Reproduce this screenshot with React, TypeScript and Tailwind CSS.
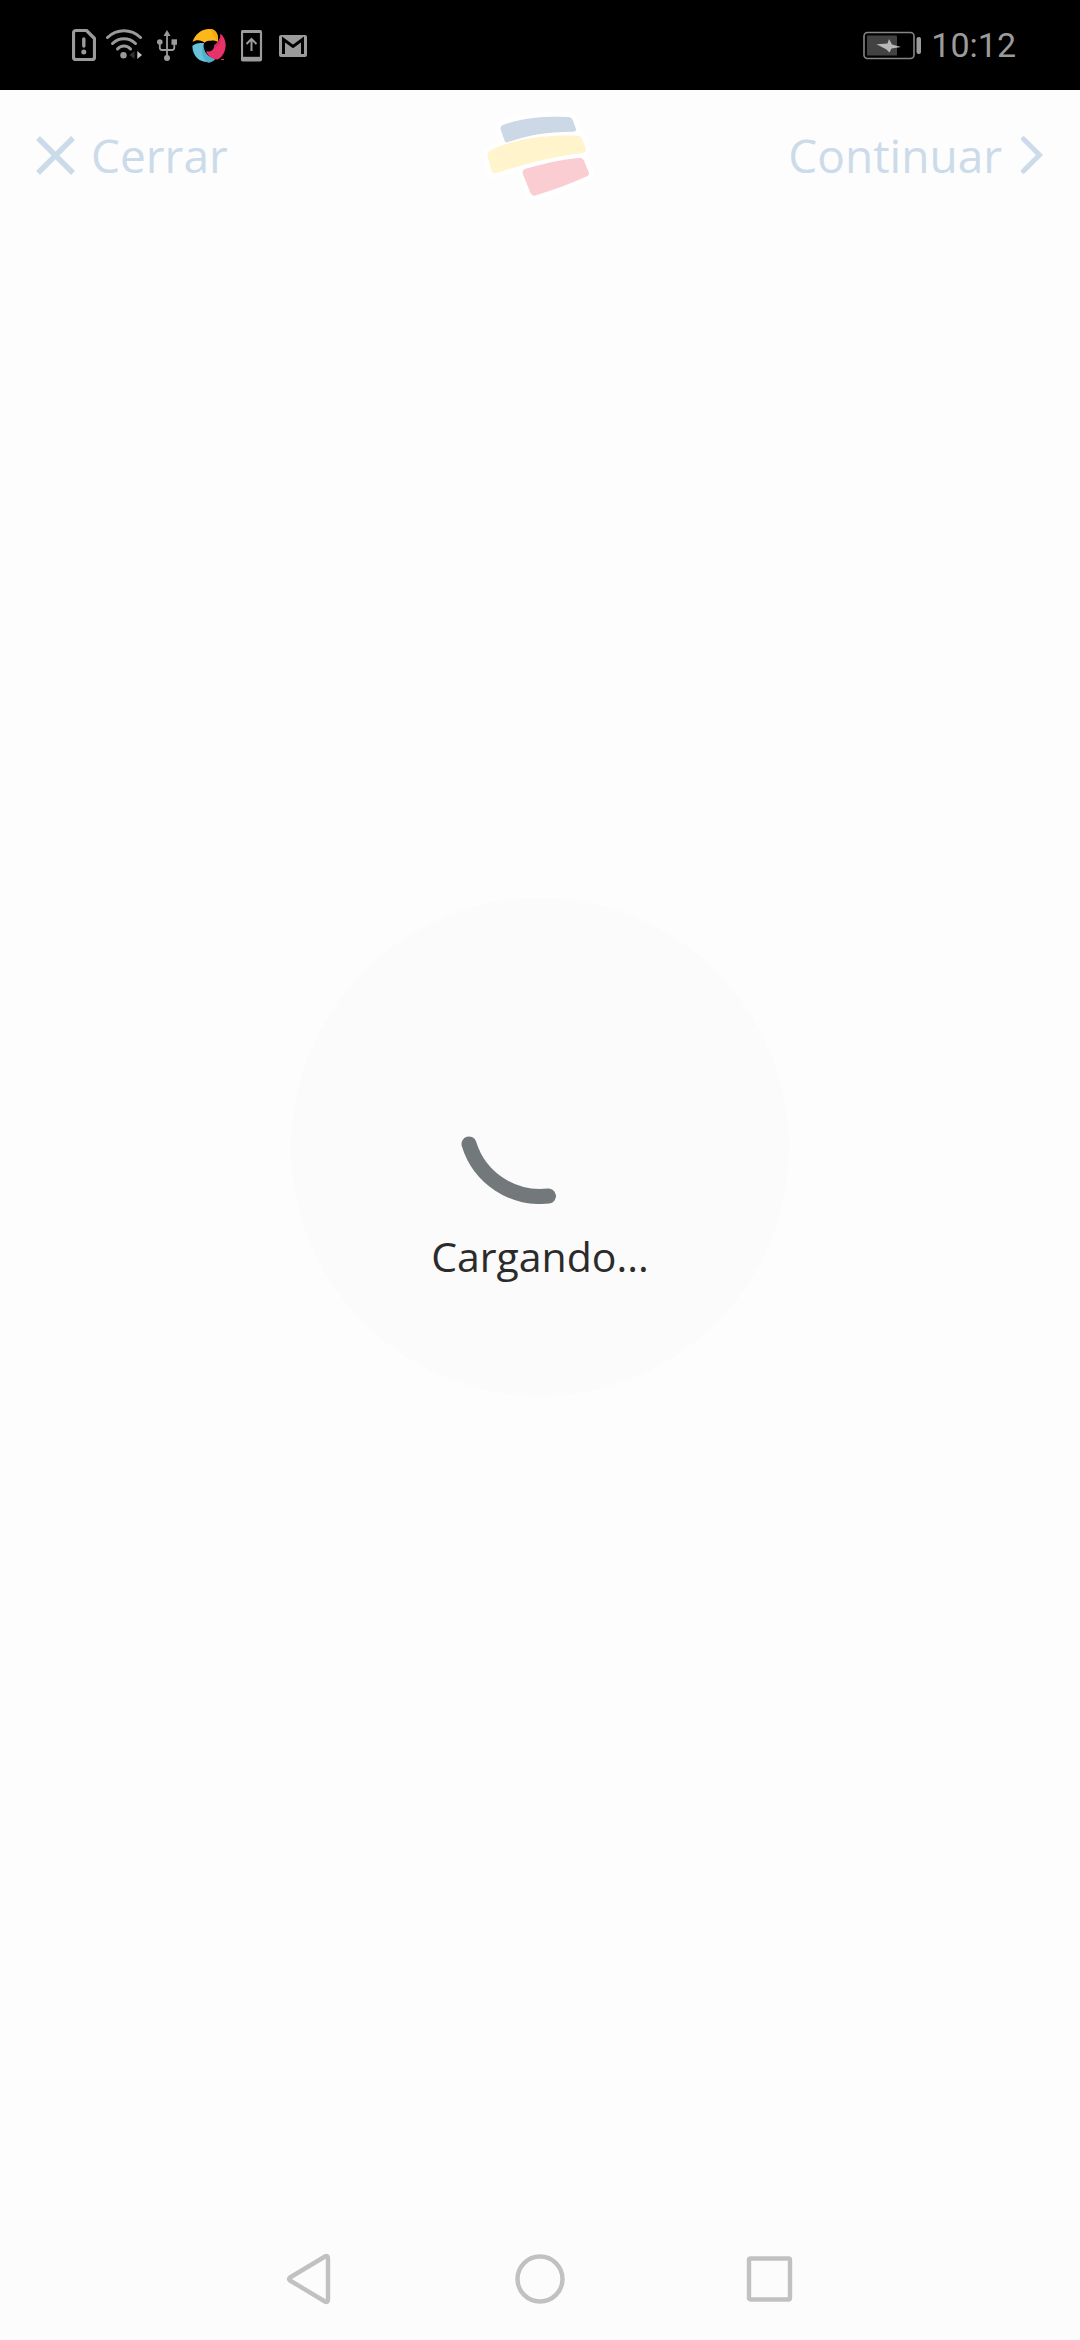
import type { ReactNode } from "react";

function StatusIcon({ box, className, children }: { box: string; className: string; children: ReactNode }) {
  return (
    <svg viewBox={box} className={`h-10 shrink-0 ${className}`} fill="none" aria-hidden="true">
      {children}
    </svg>
  );
}

function StatusBar() {
  return (
    <div className="flex h-[90px] shrink-0 items-center justify-between bg-black pl-[72px] pr-16 text-[#9b9b9b]">
      <div className="flex items-center">
        <StatusIcon box="0 0 24 40" className="mr-[10px] w-6">
          <path d="M4 5.5H14.5L22.5 13.5V32a2.5 2.5 0 0 1-2.5 2.5H4A2.5 2.5 0 0 1 1.5 32V8A2.5 2.5 0 0 1 4 5.5Z" stroke="currentColor" strokeWidth="3.2" strokeLinejoin="round" />
          <path d="M11.8 14V21" stroke="currentColor" strokeWidth="3.4" strokeLinecap="round" />
          <circle cx="11.8" cy="27" r="2.5" fill="currentColor" />
        </StatusIcon>
        <StatusIcon box="0 0 36 40" className="mr-[15px] w-9">
          <g stroke="currentColor" strokeWidth="3" strokeLinecap="round">
            <path d="M1.5 12.5C11 3.5 25 3.5 34.5 12.5" />
            <path d="M6.5 18.5C13 12 23 12 29.5 18.5" />
            <path d="M11.5 24C15 20 21 20 24.5 24" />
          </g>
          <circle cx="17.5" cy="30.3" r="3.2" fill="currentColor" />
          <path d="M28.5 26V34L23.5 30Z" fill="#333333" />
          <path d="M31.3 26V34L36 30Z" fill="#c4c4c4" />
        </StatusIcon>
        <StatusIcon box="0 0 20 40" className="mr-[15px] w-5">
          <path d="M10 10V33M2.8 18V22.5Q2.8 25 5 25H15Q17.3 25 17.3 22.5V18" stroke="currentColor" strokeWidth="1.8" />
          <path d="M10 5L13.5 11H6.5Z" fill="currentColor" />
          <circle cx="2.8" cy="17" r="2.8" fill="currentColor" />
          <rect x="14.5" y="14.3" width="5.5" height="5.5" fill="currentColor" />
          <circle cx="10" cy="33" r="3" fill="currentColor" />
        </StatusIcon>
        <StatusIcon box="0 0 34 40" className="mr-[15px] w-[34px]">
          <path d="M0.5 17C3 9 10 3.5 18 4C24 4.5 27 9 25.7 17C22 15 17 15 13 18C9 14.5 4 14.5 0.5 17Z" fill="#fdb71b" />
          <path d="M18 4C24 4.5 27 9 25.7 17C24 12 20 8 18 4Z" fill="#f9a70a" />
          <path d="M28.5 8.5C33 12.5 34.8 19 33 25C31 31 28 34 24.5 34.5C20 34 16 31 14 26.5C18 27.5 21.5 25 22 20.5C26.5 17.5 28.5 13.5 28.5 8.5Z" fill="#e8336a" />
          <path d="M28.5 8.5C30.5 16 28 23 14 26.5C18 27.5 21.5 25 22 20.5C26.5 17.5 28.5 13.5 28.5 8.5Z" fill="#d42a5e" />
          <path d="M0.3 21C3 18.5 8 17.5 12.5 18.5C10.5 24 13 31 23 34.5C16 40 1 37 0.3 21Z" fill="#68c3da" />
          <path d="M12.5 18.5C10.5 24 13 31 23 34.5C21 36.5 19 37.5 16 37.8C10 33 8 25 12.5 18.5Z" fill="#53aecb" />
          <circle cx="16.8" cy="21" r="5.3" fill="#000000" />
          <path d="M29 34.5H32" stroke="#e8336a" />
        </StatusIcon>
        <StatusIcon box="0 0 22 40" className="mr-4 w-[22px]">
          <rect x="1" y="6" width="19" height="29.5" rx="1" stroke="currentColor" strokeWidth="2.2" />
          <path d="M1 6.5H20" stroke="currentColor" strokeWidth="3" />
          <path d="M1 33.8H20" stroke="currentColor" strokeWidth="4" />
          <path d="M10.5 26V14.5M5.5 19L10.5 14L15.5 19" stroke="currentColor" strokeWidth="2" />
        </StatusIcon>
        <StatusIcon box="0 0 28 40" className="w-7">
          <rect y="10" width="28" height="22" rx="2" fill="currentColor" />
          <path d="M4.5 29V14.5L14 21.5L23.5 14.5V29" stroke="#000000" strokeWidth="3" />
        </StatusIcon>
      </div>
      <div className="flex items-center gap-[10px]">
        <StatusIcon box="0 0 58 40" className="w-[58px]">
          <rect x="1" y="7.5" width="50" height="26" rx="3.5" stroke="#858585" strokeWidth="1.6" />
          <rect x="4" y="10.5" width="30" height="20" rx="1" fill="#424242" />
          <rect x="53.5" y="12" width="4.5" height="17" rx="2" fill="currentColor" />
          <path d="M13.5 19.3L24.5 18.5L26 14L29 19.5L38 22L28.5 23.5L26.5 27.500L23.5 24.500Z" fill="#b8b8b8" />
        </StatusIcon>
        <span className="font-['Roboto',sans-serif] text-[34px] leading-10">10:12</span>
      </div>
    </div>
  );
}

function Logo() {
  const blue = "M20 13.5C40 6.5 62 5 84 6Q87.5 6 88.7 9L92 18Q92.5 20.5 89.5 20.7C65 20.5 44 24 23.5 31.2Q21.5 32 20.5 29.5L16.7 18.5Q15.7 15 20 13.5Z";
  const yellow = "M8 38.5C34 26.5 66 23.5 93.5 24.7Q97 24.7 98.3 28L101.7 38Q102.3 41 99.3 41.7C67 46 38 53.5 11.5 62.2Q8.5 62.7 7.5 60L3.7 46Q2.7 41 8 38.5Z";
  const red = "M41.5 57.8C59 52.5 77 48.5 95.5 46.7Q98.5 46.5 99.8 49.2L104.7 61Q105.7 64 103 65.3C86 73 69 79 51.5 84.5Q48 85.5 46.5 82L38.8 63Q37.7 59 41.5 57.8Z";
  return (
    <svg viewBox="0 0 112 88" className="h-[88px] w-28 justify-self-center" role="img" aria-label="Logo">
      <g fill="#ffffff" stroke="#ffffff" strokeWidth="9" strokeLinejoin="round">
        <path d={blue} />
        <path d={yellow} />
        <path d={red} />
      </g>
      <path d={blue} fill="#ccd8e6" />
      <path d={yellow} fill="#fff4cc" />
      <path d={red} fill="#facdd3" />
    </svg>
  );
}

export default function App() {
  return (
    <div className="flex min-h-screen flex-col bg-[#fdfdfd] font-['Open_Sans',sans-serif]">
      <StatusBar />
      <header className="grid h-[130px] shrink-0 grid-cols-[1fr_auto_1fr] items-center px-9 text-[46px] text-[#ccdbe9]">
        <button type="button" className="flex items-center gap-4 justify-self-start">
          <svg viewBox="0 0 39 39" className="size-[39px]" fill="none" stroke="currentColor" strokeWidth="5.5" aria-hidden="true">
            <path d="M2 2L37 37M37 2L2 37" />
          </svg>
          Cerrar
        </button>
        <Logo />
        <button type="button" className="flex items-center gap-[18px] justify-self-end">
          Continuar
          <svg viewBox="0 0 24 38" className="h-[38px] w-6" fill="none" stroke="currentColor" strokeWidth="5" strokeLinecap="round" aria-hidden="true">
            <path d="M3.5 3L19.5 19L3.5 35" strokeLinejoin="miter" />
          </svg>
        </button>
      </header>
      <main className="flex grow flex-col items-center justify-center pb-36">
        <div role="status" className="flex size-[498px] flex-col items-center justify-center gap-6 rounded-full bg-[#fbfbfb] pt-[30px]">
          <svg viewBox="0 0 164 164" className="size-[164px]" fill="none" aria-hidden="true">
            <path d="M11 104A74.3 74.3 0 0 0 90.5 156" stroke="#73787b" strokeWidth="15" strokeLinecap="round" />
          </svg>
          <p className="text-[41px] leading-14 text-[#2b2b2b]">Cargando...</p>
        </div>
      </main>
      <nav className="flex h-[122px] shrink-0 items-center justify-center gap-[180px] bg-[#fcfcfc] text-[#c1c1c1]">
        <button type="button" aria-label="Atrás">
          <svg viewBox="0 0 50 54" className="h-[54px] w-[50px]" fill="none" stroke="currentColor" strokeWidth="4.4" aria-hidden="true">
            <path d="M40 4.5L5 25.5Q3 27 5 28.5L40 49.5Q43 51 43 48V6Q43 3 40 4.5Z" strokeLinejoin="round" />
          </svg>
        </button>
        <button type="button" aria-label="Inicio">
          <svg viewBox="0 0 50 54" className="h-[54px] w-[50px]" fill="none" stroke="currentColor" strokeWidth="4.4" aria-hidden="true">
            <circle cx="25" cy="27" r="22.5" />
          </svg>
        </button>
        <button type="button" aria-label="Recientes">
          <svg viewBox="0 0 50 54" className="h-[54px] w-[50px]" fill="none" stroke="currentColor" strokeWidth="4.4" aria-hidden="true">
            <rect x="4" y="6.5" width="41" height="41" rx="1.5" />
          </svg>
        </button>
      </nav>
    </div>
  );
}
